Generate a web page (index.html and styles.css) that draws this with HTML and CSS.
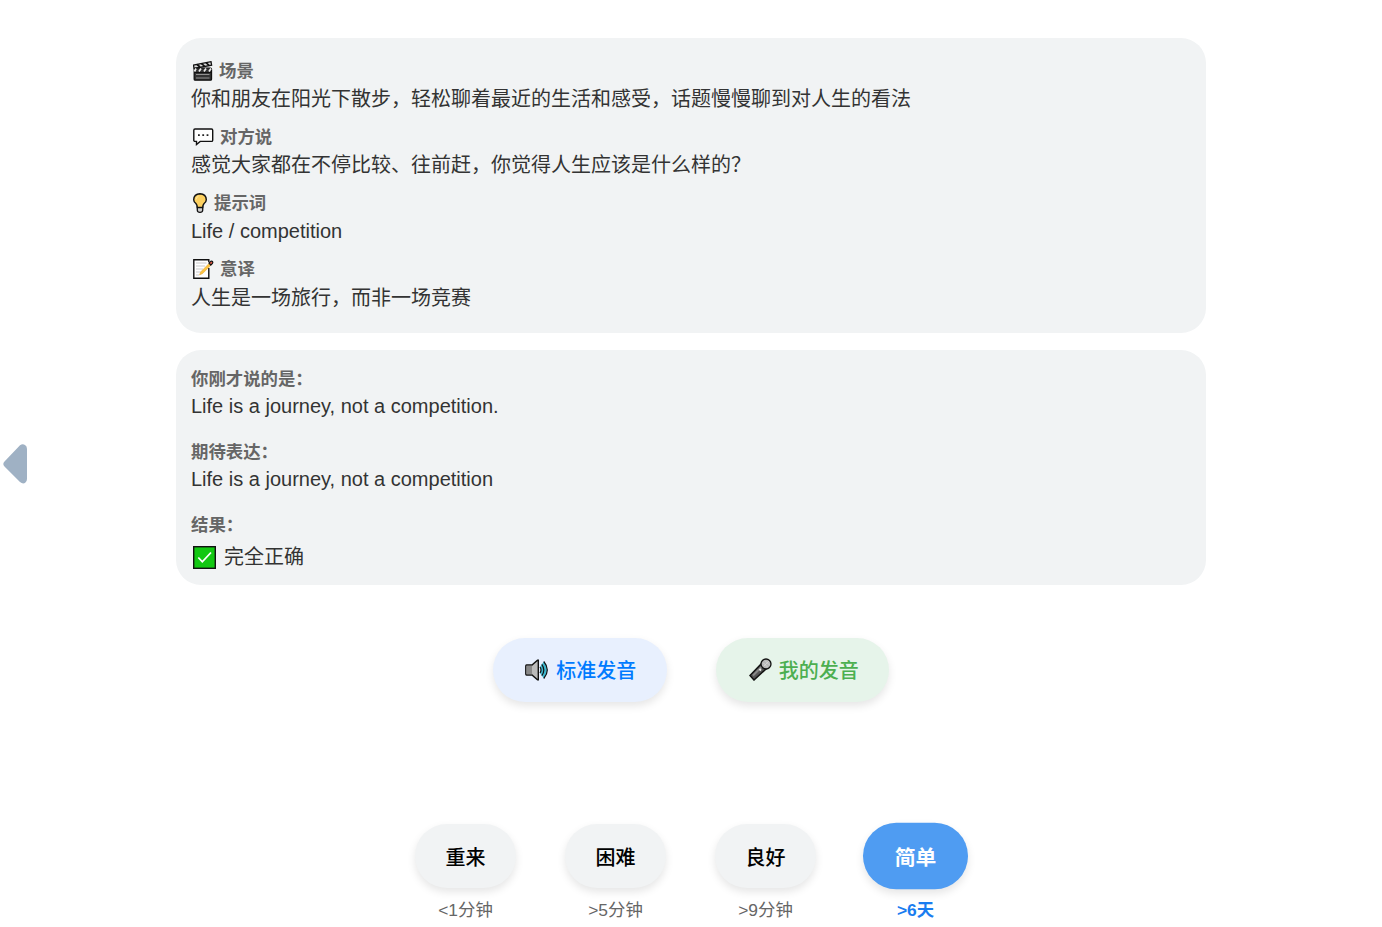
FILE: index.html
```html
<!DOCTYPE html>
<html lang="zh-CN">
<head>
  <meta charset="UTF-8">
  <meta name="viewport" content="width=device-width, initial-scale=1.0">
  <title>口语练习</title>
  <link rel="stylesheet" href="styles.css">
</head>
<body>
  <button class="nav-prev" aria-label="上一张">
    <svg width="24" height="40" viewBox="0 0 24 40"><path d="M17 1.3Q19.5-.5 22 1Q24 2.2 24 5V35Q24 37.800 22 39Q19.500 40.200 17 38L1.500 22.500Q-.9 20 1.500 17.500Z" fill="#9fb1c4"/></svg>
  </button>

  <div class="container">
    <div class="card">
      <div class="section">
        <div class="label">
          <svg class="icon-scene" width="20" height="20" viewBox="0 0 20 20">
            <path d="M1 7.500L.5 4 18 .7l.6 3.500z" fill="#ddd" stroke="#111" stroke-width="1.300"/>
            <path d="M4 3.500l3 2.500M8.500 2.600l3 2.500M13 1.700l3 2.700" stroke="#111" stroke-width="1.700"/>
            <rect x="1.200" y="7.200" width="17.300" height="12" rx="1" fill="#333" stroke="#111" stroke-width="1.300"/>
            <path d="M3 7.500l-1.500 3M8 7.500l-2 3M13 7.500l-2 3M18 7.500l-2 3" stroke="#eee" stroke-width="1.700"/>
            <path d="M1.500 11.500h17" stroke="#111"/>
            <path d="M3 13.500h13.500M3 17h13.500" stroke="#aaa" stroke-width=".8"/>
          </svg>
          <span>场景</span>
        </div>
        <div class="text">你和朋友在阳光下散步，轻松聊着最近的生活和感受，话题慢慢聊到对人生的看法</div>
      </div>
      <div class="section">
        <div class="label">
          <svg class="icon-wide" width="21" height="18" viewBox="0 0 21 18">
            <path d="M2 1h16.500q1.200 0 1.200 1.200v10q0 1.200-1.200 1.200H7.200L3.500 16.500v-3.100H2q-1.200 0-1.200-1.200v-10Q.8 1 2 1z" fill="#fff" stroke="#111" stroke-width="1.400"/>
            <path d="M5 6.300h1.800v1.800H5zM9.300 6.300h1.800v1.800H9.300zM13.600 6.300h1.800v1.800H13.600z" fill="#222"/>
          </svg>
          <span>对方说</span>
        </div>
        <div class="text">感觉大家都在不停比较、往前赶，你觉得人生应该是什么样的？</div>
      </div>
      <div class="section">
        <div class="label">
          <svg class="icon-bulb" width="14" height="20" viewBox="0 0 14 20">
            <path d="M4.300 13h5.400v4.200Q9.500 19.300 7 19.300t-2.700-2.100z" fill="#d0cfce" stroke="#111" stroke-width="1.300"/>
            <path d="M4.300 14.500q0-2.500-1.400-4Q.7 8.800.7 6.700.9.900 7 .7q6.100.2 6.300 6 0 2.100-2.200 3.800-1.400 1.500-1.400 4z" fill="#fcd060" stroke="#111" stroke-width="1.400"/>
            <path d="M3 6.500Q3.500 3.800 5.500 3.200" stroke="#ffe9a8" stroke-width="1" fill="none"/>
          </svg>
          <span>提示词</span>
        </div>
        <div class="text">Life / competition</div>
      </div>
      <div class="section">
        <div class="label">
          <svg class="icon-wide" width="21" height="20" viewBox="0 0 21 20">
            <path d="M15.800 9V19.300H.8V.7h15V3" fill="#fff" stroke="#111" stroke-width="1.400"/>
            <path d="M3 4h10.500M3 7h9M3 10h7M3 13h4.500M3 16h3" stroke="#bbb" stroke-width=".8"/>
            <path d="M6.500 16l1.300-3.200L16.500 4l1.800 1.800-8.600 8.700z" fill="#fcc440" stroke="#e0a030" stroke-width=".5"/>
            <path d="M16 4l1.700-1.600q1.200-.6 1.900.3.600 1-.3 1.900L17.800 6.100z" fill="#ea5a47" stroke="#111" stroke-width="1.200"/>
          </svg>
          <span>意译</span>
        </div>
        <div class="text">人生是一场旅行，而非一场竞赛</div>
      </div>
    </div>

    <div class="card result-card">
      <div class="section">
        <div class="label">你刚才说的是：</div>
        <div class="text">Life is a journey, not a competition.</div>
      </div>
      <div class="section">
        <div class="label">期待表达：</div>
        <div class="text">Life is a journey, not a competition</div>
      </div>
      <div class="section">
        <div class="label">结果：</div>
        <div class="text verdict">
          <svg width="23" height="23" viewBox="0 0 23 23">
            <rect x=".7" y=".7" width="21.600" height="21.600" fill="#12c812" stroke="#111" stroke-width="1.400"/>
            <path d="M5.300 11.500l4 4.300 8.700-9.300" fill="none" stroke="#fff" stroke-width="1.800"/>
          </svg>
          <span>完全正确</span>
        </div>
      </div>
    </div>

    <div class="audio-buttons">
      <button class="btn btn-standard">
        <svg width="24" height="22" viewBox="0 0 24 22">
          <path d="M1.500 6H7l5.500-4.700h.8v19.400h-.8L7 16H1.500Q.8 16 .8 15V7Q.8 6 1.500 6z" fill="#bbb" stroke="#111" stroke-width="1.400"/>
          <path d="M1.500 6.700H7v8.600H1.500z" fill="#888"/>
          <path d="M15 8q2 3 0 6l3.800 5.500q6.500-8.500 0-17z" fill="#3fb8cf"/>
          <path d="M15 8q2 3 0 6M16.800 5.300q4 5.700 0 11.400M18.800 2.500q7 8.500 0 17" fill="none" stroke="#111" stroke-width="1.200"/>
        </svg>
        <span>标准发音</span>
      </button>
      <button class="btn btn-mine">
        <svg width="23" height="23" viewBox="0 0 23 23">
          <path d="M1 17.500L12 6l5 5L5 22z" fill="#555" stroke="#111" stroke-width="1.500"/>
          <path d="M4 17.500l9-9" stroke="#888" stroke-width="2"/>
          <path d="M10.500 11l1.500 1.500" stroke="#eee" stroke-width="1.800"/>
          <circle cx="17" cy="6" r="5" fill="#b8b8b8" stroke="#111" stroke-width="1.300"/>
          <path d="M14.500 5l4 4M16.500 3l4 4M15 8l5-5" stroke="#ddd" stroke-width=".7"/>
        </svg>
        <span>我的发音</span>
      </button>
    </div>

    <div class="rating">
      <div class="rating-item">
        <button class="btn">重来</button>
        <div class="interval">&lt;1分钟</div>
      </div>
      <div class="rating-item">
        <button class="btn">困难</button>
        <div class="interval">&gt;5分钟</div>
      </div>
      <div class="rating-item">
        <button class="btn">良好</button>
        <div class="interval">&gt;9分钟</div>
      </div>
      <div class="rating-item selected">
        <button class="btn">简单</button>
        <div class="interval">&gt;6天</div>
      </div>
    </div>
  </div>
</body>
</html>
```
FILE: styles.css
```css
body {
  font-family: "Liberation Sans", "Noto Sans CJK SC", sans-serif;
  margin: 0;
  background-color: #fff;
  color: #333;
  height: 927px;
  overflow: hidden;
}
.container {
  width: 1030px;
  margin: 0 auto;
  padding-top: 38px;
}
.card {
  box-sizing: border-box;
  height: 295px;
  background-color: #f1f3f4;
  border-radius: 25px;
  padding: 20px 15px;
  margin-bottom: 17px;
}
.section {
  margin-bottom: 10px;
}
.label {
  display: flex;
  align-items: center;
  height: 26px;
  font-size: 17.4px;
  font-weight: bold;
  line-height: 26px;
  color: #666;
}
.label svg {
  flex: none;
  margin: 0 6px 0 2px;
}
.label .icon-bulb {
  margin-right: 7px;
}
.text {
  height: 30px;
  font-size: 20px;
  line-height: 30px;
}
.card .section:last-child .text {
  line-height: 32px;
}
.result-card {
  height: 235px;
  padding-top: 16px;
  margin-bottom: 53px;
}
.result-card .section {
  margin-bottom: 19px;
}
.result-card .text {
  height: 28px;
  line-height: 28px;
}
.result-card .verdict {
  display: flex;
  align-items: center;
  height: 38px;
}
.verdict svg {
  margin: 0 8px 0 2px;
}
.audio-buttons {
  display: flex;
  justify-content: center;
  gap: 49px;
  margin-bottom: 122px;
}
.btn {
  display: flex;
  align-items: center;
  justify-content: center;
  box-sizing: border-box;
  width: 101px;
  height: 64px;
  padding: 0;
  border: none;
  border-radius: 32px;
  font-family: inherit;
  font-size: 20px;
  font-weight: 500;
  color: #000;
  background-color: #f1f3f4;
  box-shadow: 0 4px 8px rgba(0, 0, 0, 0.1);
  cursor: pointer;
}
.audio-buttons .btn {
  width: 173.5px;
  gap: 7px;
  padding: 0 0 1px 2px;
}
.audio-buttons .btn-standard {
  background-color: #e8f0fe;
  color: #007bff;
}
.audio-buttons .btn-mine {
  padding-left: 3px;
  background-color: #e6f4ea;
  color: #4caf50;
}
.rating {
  display: flex;
  justify-content: center;
  gap: 49px;
  padding-right: 1px;
}
.interval {
  margin-top: 9px;
  font-size: 17.4px;
  line-height: 26px;
  text-align: center;
  color: #666;
}
.selected .btn {
  background-color: #4f9cf2;
  color: #fff;
  font-weight: bold;
  transform: scale(1.04);
}
.selected .interval {
  color: #1a7df0;
  font-weight: bold;
}
.nav-prev {
  position: fixed;
  left: 3px;
  top: 444px;
  padding: 0;
  border: none;
  background: none;
  cursor: pointer;
}
.nav-prev svg {
  display: block;
}
```
